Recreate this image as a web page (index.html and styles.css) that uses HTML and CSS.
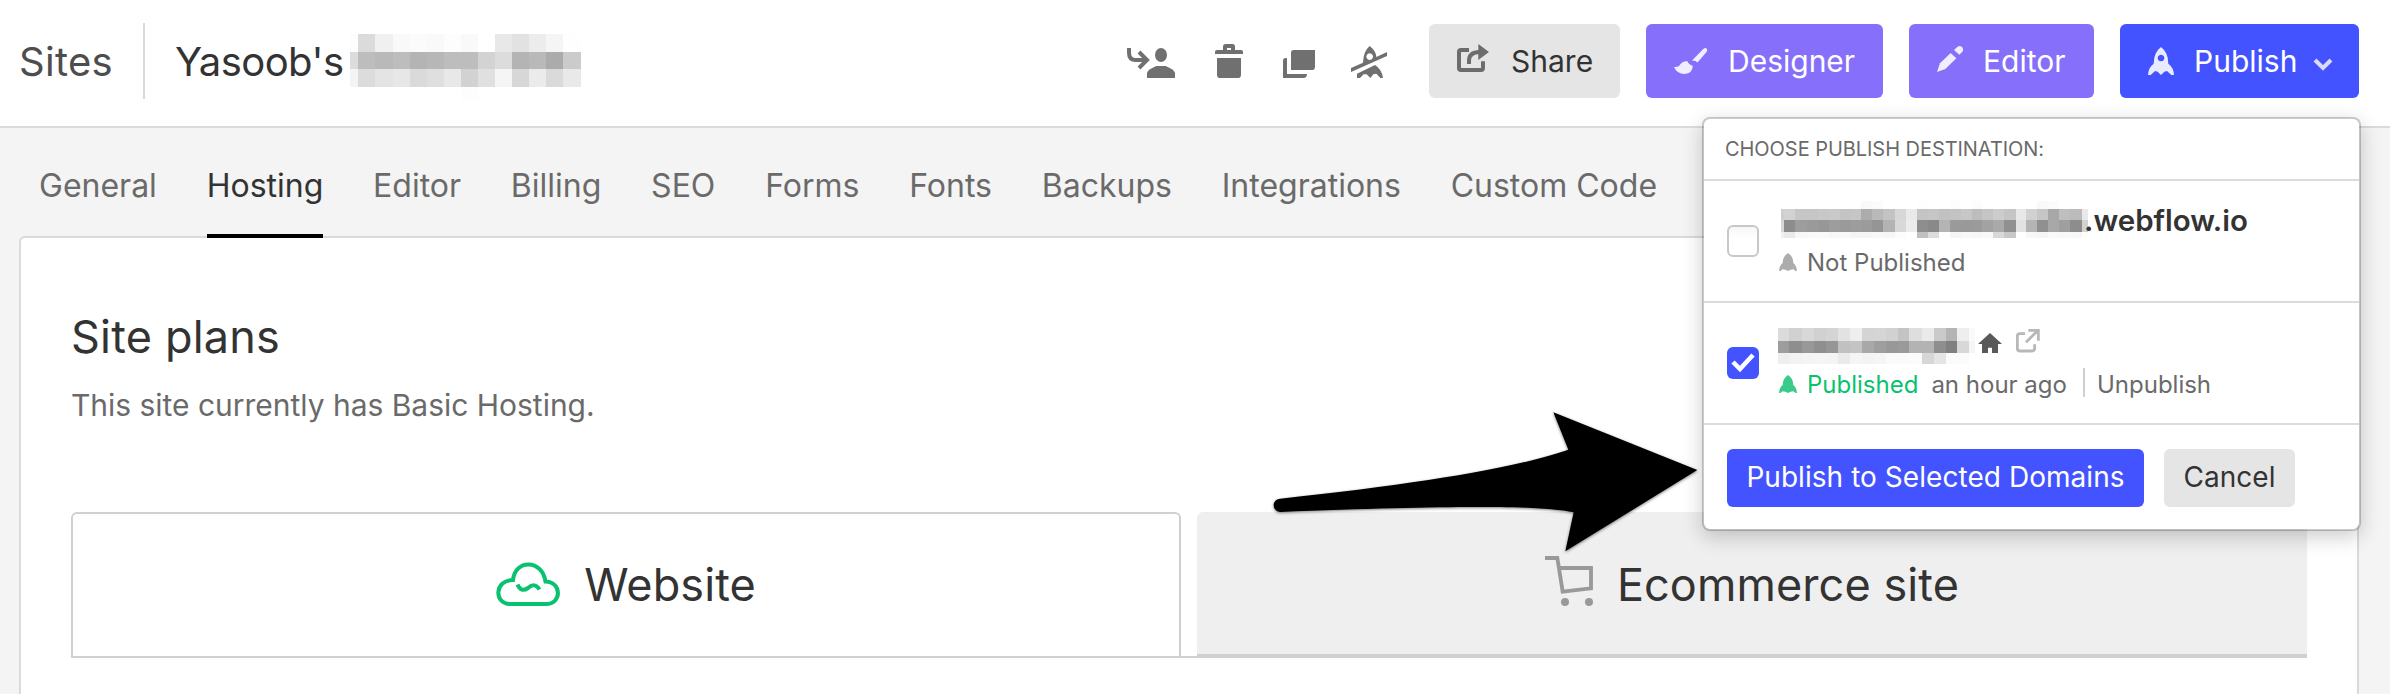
FILE: index.html
```html
<!DOCTYPE html>
<html lang="en">
<head>
<meta charset="utf-8">
<title>Site settings</title>
<link rel="stylesheet" href="styles.css">
</head>
<body>
<header class="topbar">
  <a class="crumb">Sites</a>
  <span class="crumb-rule"></span>
  <span class="site-name">Yasoob's</span>
  <svg class="mosaic mosaic-title" data-mosaic="title" width="231" height="66" viewBox="350 34 231 66"></svg>
  <div class="tools">
    <svg width="48" height="30" viewBox="36 42 144 90" class="tool tool-user"><path d="M42 42V56Q42 78 62 78H94M72 54L96 78L72 102" fill="none" stroke="currentColor" stroke-width="12"/><ellipse cx="138" cy="63" rx="18" ry="21"/><path d="M96 132V116Q100 106 124 96H152Q176 106 180 116V132Z"/></svg>
    <svg width="28" height="34" viewBox="300 30 84 102" class="tool tool-trash"><path fill-rule="evenodd" d="M300 60V53Q300 48 306 48H324V38Q324 30 332 30H352Q360 30 360 38V48H378Q384 48 384 53V60ZM336 48H348V42H336Z"/><path d="M306 72H378V122Q378 132 368 132H316Q306 132 306 122Z"/></svg>
    <svg width="32" height="28" viewBox="504 48 96 84" class="tool tool-copy"><path d="M528 56Q528 48 536 48H600V98Q600 108 590 108H528Z"/><path d="M504 80Q504 72 512 72H516V120H576Q576 132 565 132H504Z"/></svg>
    <svg width="36" height="32" viewBox="708 36 108 96" class="tool tool-unpub"><path fill-rule="evenodd" d="M764 36Q783 50 784 69L816 54V66L708 114V102L744 86Q745 52 764 36ZM764 58A10 10 0 1 0 764.1 58Z"/><path d="M726 132V119L780 93Q801 106 804 132H796L784 119L775 121L766 132L755 121L746 121L735 132Z"/></svg>
  </div>
  <a class="btn btn-share"><svg width="32" height="28" viewBox="1026 30 96 84"><path d="M1062 48H1038Q1032 48 1032 54V102Q1032 108 1038 108H1098Q1104 108 1104 102V82M1062 90V80Q1062 54 1094 54" fill="none" stroke="currentColor" stroke-width="12"/><path d="M1090 30L1122 54L1090 78Z"/></svg><span>Share</span></a>
  <a class="btn btn-designer"><svg width="34" height="26" viewBox="0 0 34 26"><path d="M18 12.500L29.500 .8Q32 -.8 33 1.200Q33.500 2.500 32.500 4L23.500 14.500Q22 12.500 18 12.500Z"/><path d="M0 19Q5 19.500 6.500 16Q9 12.500 13.500 13.300Q14.500 16.500 18.800 18Q18.500 25.500 10.500 26Q3 26 0 19Z"/></svg><span>Designer</span></a>
  <a class="btn btn-editor"><svg width="26" height="26" viewBox="21 30 78 78"><path d="M21 108L30 82L62 51L79 67L46 99Z"/><path d="M72 42L82 33Q89 27 96 33Q102 41 97 47L88 56Z"/></svg><span>Editor</span></a>
  <a class="btn btn-publish"><svg width="26" height="28" viewBox="654 30 78 84"><path fill-rule="evenodd" d="M693 30Q715 47 715 80Q731 92 732 114H724L711 102L703 104L693 114L683 104L675 102L662 114H654Q655 92 671 80Q671 47 693 30ZM693 53A10 10 0 1 0 693.1 53Z"/></svg><span>Publish</span><svg class="chevron" width="20" height="13" viewBox="0 0 20 13"><path d="M2 2L10 10L18 2" fill="none" stroke="currentColor" stroke-width="4"/></svg></a>
</header>

<nav class="tabs">
  <a class="tab">General</a><a class="tab tab-active">Hosting</a><a class="tab">Editor</a><a class="tab">Billing</a><a class="tab">SEO</a><a class="tab">Forms</a><a class="tab">Fonts</a><a class="tab">Backups</a><a class="tab">Integrations</a><a class="tab">Custom Code</a>
</nav>

<main class="panel">
  <h1 class="heading">Site plans</h1>
  <p class="sub">This site currently has Basic Hosting.</p>
  <div class="plans">
    <div class="plan plan-on"><svg width="64" height="44" viewBox="0 0 64 44"><path d="M14 42C-2 42 -2 18 17 18C19 -3 46 -3 49.500 19.500C66 20 66 42 50 42ZM21.500 22.500Q25 31 32 26Q39 20 43.500 27.500" fill="none" stroke="#09c270" stroke-width="4"/></svg><span>Website</span></div>
    <div class="plan plan-off"><svg width="48" height="50" viewBox="915 498 144 150"><path d="M915 504H952L968 605L1053 595V534H960" fill="none" stroke="#999" stroke-width="11.500"/><circle cx="975" cy="636" r="12" fill="#999"/><circle cx="1047" cy="636" r="12" fill="#999"/></svg><span>Ecommerce site</span></div>
  </div>
</main>

<section class="menu">
  <div class="menu-title">CHOOSE PUBLISH DESTINATION:</div>
  <div class="dest">
    <span class="check"></span>
    <div class="dest-body">
      <div class="domain"><svg class="mosaic mosaic-one" data-mosaic="one" width="310" height="38" viewBox="1778 201 310 38"></svg><span class="domain-name">.webflow.io</span></div>
      <div class="status"><svg class="rocket rocket-off" width="18" height="18" viewBox="27 174 54 54"><path d="M54 174Q70 185 70 204Q80 212 81 228H77L70 223L62 224L54 228L46 224L38 223L31 228H27Q28 212 38 204Q38 185 54 174Z"/></svg><span>Not Published</span></div>
    </div>
  </div>
  <div class="dest">
    <span class="check check-on"><svg width="24" height="20" viewBox="0 0 24 20"><path d="M2 9L9 16L22 2" fill="none" stroke="#fff" stroke-width="4.500"/></svg></span>
    <div class="dest-body">
      <div class="domain"><svg class="mosaic mosaic-two" data-mosaic="two" width="200" height="38" viewBox="1778 327 200 38"></svg>
        <svg class="home" width="24" height="20" viewBox="624 414 72 60"><path d="M660 414L696 447H684V474H666V458H654V474H636V447H624Z"/></svg>
        <svg class="ext" width="24" height="24" viewBox="738 403 72 72"><path d="M765 417H750Q742 417 742 425V461Q742 469 750 469H786Q794 469 794 461V449M768 443L802 409M775 407H805V438" fill="none" stroke="currentColor" stroke-width="8.500"/></svg></div>
      <div class="status"><svg class="rocket rocket-on" width="18" height="18" viewBox="27 174 54 54"><path d="M54 174Q70 185 70 204Q80 212 81 228H77L70 223L62 224L54 228L46 224L38 223L31 228H27Q28 212 38 204Q38 185 54 174Z"/></svg><span class="live">Published</span><span class="when">an hour ago</span><span class="bar"></span><span>Unpublish</span></div>
    </div>
  </div>
  <div class="actions"><a class="act act-go">Publish to Selected Domains</a><a class="act act-no">Cancel</a></div>
</section>

<svg class="arrow" width="440" height="160" viewBox="90 50 1320 480"><path d="M121 325C550 279 830 232 985 178L940 66L1372 239L976 483L1001 366C900 345 640 345 121 365A20 20 0 0 1 121 325Z"/></svg>
<script src="mosaic.js"></script>
</body>
</html>
```
FILE: styles.css
```css
* { box-sizing: border-box; }
body { margin: 0; height: 694px; overflow: hidden; position: relative; background: #f4f4f4; color: #333; font-family: Inter, "Liberation Sans", sans-serif; font-weight: 400; white-space: nowrap; }
svg { display: block; flex: none; fill: currentColor; }

.topbar { display: flex; align-items: center; height: 128px; padding: 0 31px 4px 19px; background: #fff; border-bottom: 2px solid #dbdbdb; font-size: 40px; }
.crumb { width: 124px; color: #4d4d4d; letter-spacing: .3px; }
.crumb-rule { width: 2px; height: 76px; background: #dadada; margin-right: 30px; }
.site-name { width: 175px; letter-spacing: -.55px; }
.mosaic-title { margin-top: 12px; }

.tools { display: flex; flex: 1; justify-content: flex-end; height: 74px; color: #707070; }
.tool-user { margin-top: 24px; }
.tool-trash { margin: 20px 0 0 40px; }
.tool-copy { margin: 26px 0 0 40px; }
.tool-unpub { margin: 22px 42px 0 36px; }

.btn { display: flex; align-items: center; flex: none; height: 74px; border-radius: 6px; color: #fff; font-size: 30px; }
.btn svg { opacity: .88; }
.btn-share { width: 191px; padding-left: 28px; background: #e5e5e5; color: #333; }
.btn-share svg { color: #5c5c5c; margin: 0 22px 6px 0; }
.btn-designer { width: 237px; margin-left: 26px; padding-left: 28px; background: #8670fb; }
.btn-designer svg { margin-right: 20px; }
.btn-editor { width: 185px; margin-left: 26px; padding-left: 28px; background: #8670fb; }
.btn-editor svg { margin: 0 20px 4px 0; }
.btn-publish { width: 239px; margin-left: 26px; padding-left: 28px; background: #4353ff; }
.btn-publish svg { margin-right: 20px; }
.btn-publish .chevron { margin: 6px 0 0 16px; opacity: .8; }

.tabs { position: relative; z-index: 1; display: flex; gap: 49.800px; height: 110px; padding-left: 39px; }
.tab { height: 110px; padding-top: 9px; line-height: 97px; border-bottom: 4px solid transparent; color: #6a6a6a; font-size: 32px; }
.tab-active { color: #333; border-bottom-color: #000; }

.panel { width: 2340px; height: 480px; margin: -2px 0 0 19px; padding: 69px 50px 0; background: #fff; border: 2px solid #dadada; border-radius: 6px; }
.heading { margin: 0; font-size: 45px; line-height: 60px; font-weight: 400; letter-spacing: .2px; }
.sub { margin: 18px 0 0; font-size: 30px; line-height: 40px; color: #6a6a6a; letter-spacing: -.02px; }
.plans { display: grid; grid-template-columns: 1110px 1110px; gap: 16px; margin-top: 87px; height: 146px; border-bottom: 2px solid #d0d0d0; }
.plan { display: flex; align-items: center; justify-content: center; gap: 24px; font-size: 45px; letter-spacing: .1px; }
.plan-on { padding-bottom: 2px; border: 2px solid #d0d0d0; border-bottom: 0; border-radius: 6px 6px 0 0; }
.plan-off { padding-top: 2px; background: #efefef; border-bottom: 2px solid #d0d0d0; border-radius: 6px 6px 0 0; }
.plan-off svg { margin-top: -6px; }

.menu { position: absolute; z-index: 2; left: 1702px; top: 117px; width: 659px; height: 414px; background: #fff; background-clip: padding-box; border: 2px solid rgba(0,0,0,.2); border-radius: 8px; box-shadow: 0 6px 20px rgba(0,0,0,.2); }
.menu-title { height: 62px; padding-left: 21px; line-height: 60px; border-bottom: 2px solid #dbdbdb; color: #6a6a6a; font-size: 20px; letter-spacing: -.05px; }
.dest { display: flex; align-items: center; height: 122px; padding-left: 23px; border-bottom: 2px solid #dbdbdb; }
.check { width: 32px; height: 32px; margin-right: 19px; border: 2px solid #c8c8c8; border-radius: 6px; background: linear-gradient(#f7f7f7, #fff 40%); }
.check-on { display: flex; align-items: center; justify-content: center; border: 0; background: #4353ff; }
.domain { display: flex; align-items: center; height: 42px; font-size: 29.500px; font-weight: 600; }
.domain-name { margin-left: -4px; }
.mosaic-two { margin-top: 8px; }
.home { margin-top: 2px; color: #595959; }
.ext { margin: -2px 0 0 14px; color: #b8b8b8; }
.status { display: flex; align-items: center; height: 42px; font-size: 24px; color: #6a6a6a; }
.rocket { margin: 0 10px 0 1px; }
.rocket-off { color: #adadad; }
.rocket-on { color: #38cb89; }
.live { color: #09c270; }
.when { margin-left: 13px; }
.bar { width: 2px; height: 29px; margin: -4px 12px 0 16px; background: #d0d0d0; }
.actions { display: flex; gap: 20px; padding: 24px 0 0 23px; }
.act { height: 58px; line-height: 56px; border-radius: 6px; font-size: 28px; text-align: center; letter-spacing: .05px; }
.act-go { width: 417px; background: #4353ff; color: #fff; }
.act-no { width: 131px; background: #e5e5e5; }

.arrow { position: absolute; z-index: 3; left: 1270px; top: 406.670px; color: #000; filter: drop-shadow(0 1px 1.500px rgba(0,0,0,.5)); }
```
FILE: mosaic.js
```js
// Pixelated name blocks: x/y are cell edges, rows are grey levels ("--" is empty).
var blocks = {
  title: {
    x: [350,358.3,375.3,392.7,409.7,427,444,461,478,495,512,529,546.3,563.3,580.5],
    y: [34.3,52,69.3,86.7,99.3],
    rows: ['fd db f0 f9 fb f9 fd f9 -- e8 e2 ec f5 fe',
           'dc bd b9 bd b4 b7 bd bd d3 dc b4 b9 ab cb',
           'f4 dc e4 e7 da df e8 d2 e0 f5 d7 eb da e9',
           '-- -- -- -- -- -- -- fd -- -- -- -- -- --']
  },
  one: {
    x: [1781,1784,1795.3,1806.7,1817.7,1828.7,1839.7,1850.7,1861.3,1872.3,1883.3,1894.7,1905.7,1916.7,1927.7,1938.7,1949.7,1960.7,1971.7,1982.3,1993.3,2004.3,2015.7,2026.3,2037.3,2048.3,2059.3,2070.3,2081.7,2087.7],
    y: [201,209.3,220.3,231.7,237.7],
    rows: ['-- -- -- -- -- -- -- -- f9 fb -- -- -- fe -- -- fd -- fc -- -- -- -- -- f9 fb -- -- --',
           'cf d2 c6 c6 c8 c9 c4 c6 ac b9 c3 d7 e9 c4 c6 c1 c3 c7 bd c5 cc c5 e8 d1 c6 a8 bf bb e9',
           'd6 8c 9d 9a 97 9d 9a 9d 9b 95 b3 d8 ec 8e 89 b4 9a 99 9b a2 a9 90 e2 b4 90 a8 9f 8d d2',
           'f1 ea f7 f9 fa f7 f8 f5 f5 f7 f6 fc -- c0 dc fe f5 f8 f6 f8 d8 c8 -- f7 f5 fa f8 f7 fd']
  },
  two: {
    x: [1778,1789.3,1801.7,1813.7,1825.7,1837.7,1849.7,1861.7,1873.7,1885.7,1897.7,1909.3,1921.7,1933.7,1945.7,1957.3,1969.3,1974.7],
    y: [328.3,340.7,352.7,364],
    rows: ['db d1 d8 d1 d4 e2 ee d4 d5 d1 c4 de ea ca b4 ee fa',
           '9d 8e 98 8f 96 c1 c4 a8 9e 98 9a b3 b3 8e 80 d8 f6',
           'ee f2 f4 f5 f4 ea f5 f3 f5 fa fa fb d7 e5 fb fb --']
  }
};
document.querySelectorAll('[data-mosaic]').forEach(function (svg) {
  var b = blocks[svg.dataset.mosaic];
  b.rows.forEach(function (row, r) {
    row.split(' ').forEach(function (v, c) {
      if (v === '--') return;
      var el = document.createElementNS('http://www.w3.org/2000/svg', 'rect');
      el.setAttribute('x', b.x[c]);
      el.setAttribute('y', b.y[r]);
      el.setAttribute('width', b.x[c + 1] - b.x[c]);
      el.setAttribute('height', b.y[r + 1] - b.y[r]);
      el.setAttribute('fill', '#' + v + v + v);
      el.setAttribute('shape-rendering', 'crispEdges');
      svg.appendChild(el);
    });
  });
});
```
